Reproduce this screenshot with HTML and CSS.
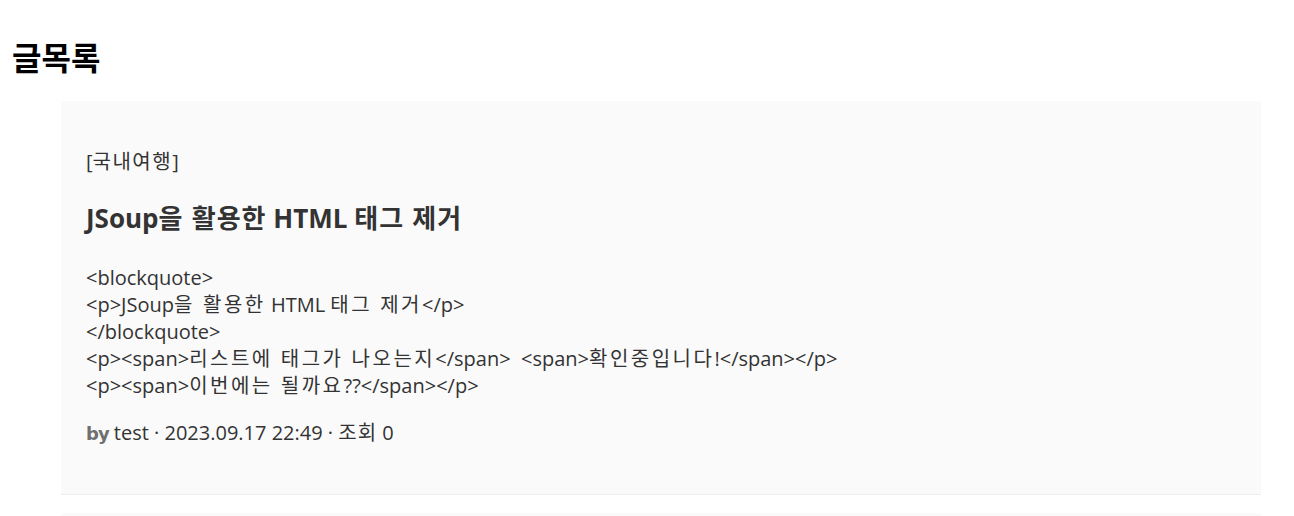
FILE: index.html
```html
<!DOCTYPE html>
<html lang="ko">
<head>
<meta charset="utf-8">
<title>글목록</title>
<link rel="stylesheet" href="styles.css">
</head>
<body>
<h1 class="page-title">글목록</h1>
<ul class="post-list">
  <li class="post">
    <p class="post-category">[<span class="ko">국내여행</span>]</p>
    <h3 class="post-title">JSoup<span class="ko">을 활용한</span> HTML <span class="ko">태그 제거</span></h3>
    <div class="post-body">
      <div>&lt;blockquote&gt;</div>
      <div>&lt;p&gt;JSoup<span class="ko">을 활용한</span> HTML <span class="ko">태그 제거</span>&lt;/p&gt;</div>
      <div>&lt;/blockquote&gt;</div>
      <div>&lt;p&gt;&lt;span&gt;<span class="ko">리스트에 태그가 나오는지</span>&lt;/span&gt; &nbsp;&lt;span&gt;<span class="ko">확인중입니다</span>!&lt;/span&gt;&lt;/p&gt;</div>
      <div>&lt;p&gt;&lt;span&gt;<span class="ko">이번에는 될까요</span>??&lt;/span&gt;&lt;/p&gt;</div>
    </div>
    <p class="post-meta"><span class="by">by</span> test · 2023.09.17 22:49 · <span class="ko">조회</span> 0</p>
  </li>
  <li class="post"></li>
</ul>
</body>
</html>
```
FILE: styles.css
```css
* { box-sizing: border-box; }
body {
  margin: 0;
  font-family: "Open Sans", "Noto Sans CJK KR", sans-serif;
  color: #333;
  background: #fff;
}
.page-title {
  margin: 0;
  padding: 34px 0 0 12px;
  height: 101px;
  font-family: "Noto Sans CJK KR", sans-serif;
  font-size: 32px;
  font-weight: 700;
  color: #000;
  line-height: 44px;
}
.post-list {
  list-style: none;
  margin: 0;
  padding: 0 0 0 61px;
}
.post {
  width: 1200px;
  background: #fafafa;
  border-bottom: 1px solid #eee;
  padding: 47px 25px 48px;
  margin-bottom: 18px;
}
.ko {
  font-family: "Noto Sans CJK KR", sans-serif;
  letter-spacing: 2.5px;
  line-height: 1;
}
.post-category {
  margin: 0;
  font-size: 20px;
  line-height: 27px;
}
.post-category .ko { letter-spacing: 1.5px; }
.post-title {
  margin: 25px 0 0;
  font-size: 26px;
  font-weight: 700;
  line-height: 36px;
}
.post-title .ko { letter-spacing: 1px; }
.post-body {
  margin-top: 28px;
  font-size: 20px;
  line-height: 27px;
}
.post-meta {
  margin: 20px 0 0;
  font-size: 20px;
  line-height: 27px;
}
.post-meta .ko { letter-spacing: 1px; }
.by {
  color: #6f6f6f;
  font-family: "DejaVu Sans", sans-serif;
  font-size: 18px;
  font-weight: 700;
  letter-spacing: -1px;
  line-height: 1;
}
```
